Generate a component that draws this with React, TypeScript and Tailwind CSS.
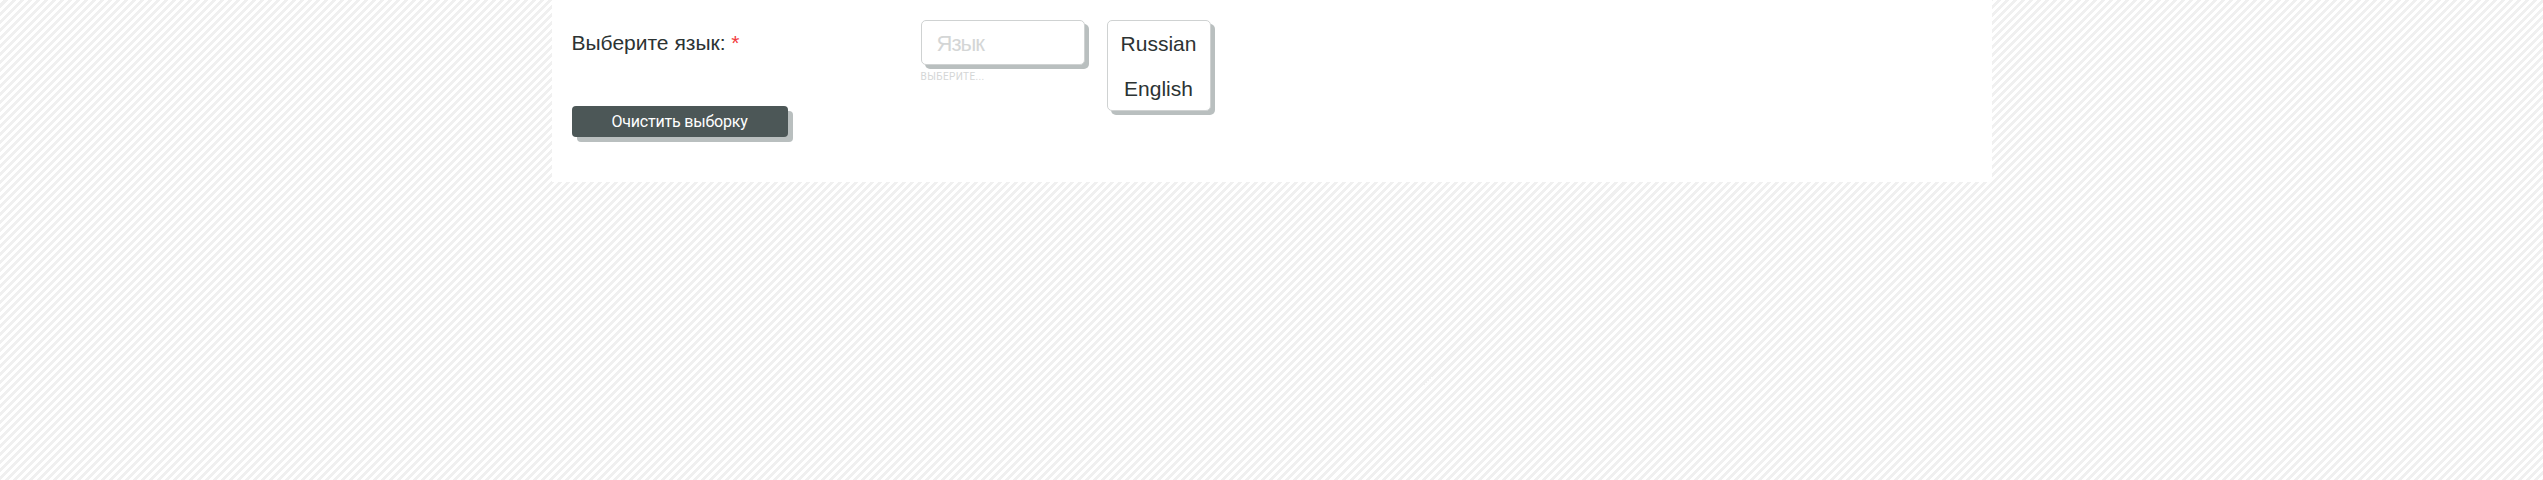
export default function App() {
  return (
    <div className="min-h-[480px] bg-[repeating-linear-gradient(135deg,#ffffff_0px,#ffffff_2.83px,#f0f0f0_2.83px,#f0f0f0_5.66px)] font-['Liberation_Sans',sans-serif]">
      {/* Form panel */}
      <div className="mx-auto h-[182px] w-[1440px] bg-white pl-5 pt-5">
        <div className="flex">
          <div className="w-[349px] pt-[11px] text-[21px] leading-[24px] text-[#2c3333]">
            Выберите язык: <span className="text-[#f23a3c]">*</span>
          </div>
          <div className="w-[186px]">
            <div className="flex h-[45px] w-[164px] items-center rounded-[5px] border border-[#cfd2d2] bg-white pl-[15px] pt-[2px] text-[22px] tracking-[-1px] text-[#d4d6d6] shadow-[4px_4px_0_#b9bfbf]">
              Язык
            </div>
            <div className="mt-[6px] font-['Roboto',sans-serif] text-[10px] leading-[12px] tracking-[0.4px] text-[#d4d6d6]">ВЫБЕРИТЕ...</div>
          </div>
          <div className="flex h-[91px] w-[104px] flex-col items-center justify-center gap-[21px] rounded-[5px] border border-[#cfd2d2] bg-white pt-[1px] text-[21px] leading-[24px] text-[#2c3333] shadow-[4px_4px_0_#b9bfbf]">
            <span>Russian</span>
            <span>English</span>
          </div>
        </div>
        <button
          type="button"
          className="-mt-[5px] block h-[31px] w-[216px] rounded-[4px] bg-[#4c5757] text-center font-['Roboto',sans-serif] text-[16px] leading-[31px] tracking-[-0.2px] text-white shadow-[5px_5px_0_#b9bfbf]"
        >
          Очистить выборку
        </button>
      </div>
    </div>
  );
}
